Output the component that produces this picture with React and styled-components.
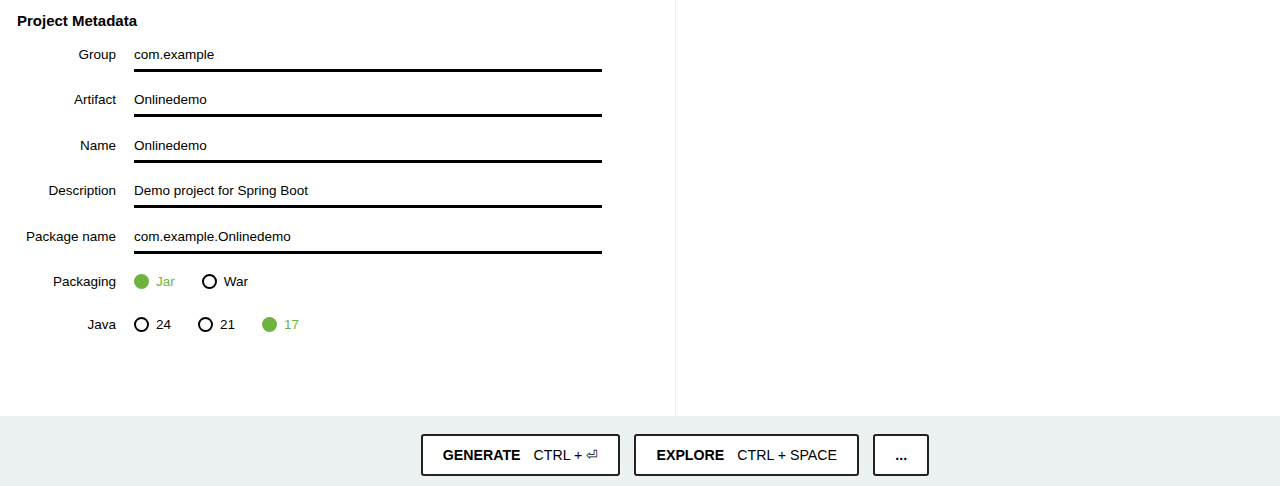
import React from "react";
import styled, { createGlobalStyle } from "styled-components";

const Global = createGlobalStyle`
  html, body { margin: 0; padding: 0; background: #fff; }
  body { font-family: "Liberation Sans", Arial, sans-serif; color: #000; }
`;

const Page = styled.div`
  width: 1280px;
  height: 486px;
  display: flex;
  flex-direction: column;
  overflow: hidden;
`;

const Main = styled.div`
  height: 416px;
  display: flex;
`;

const LeftCol = styled.div`
  box-sizing: border-box;
  width: 676px;
  border-right: 1px solid #e8eded;
  padding: 12px 0 0 17px;
`;

const RightCol = styled.div`
  flex: 1;
`;

const Title = styled.div`
  font-weight: bold;
  font-size: 15px;
  line-height: 18px;
  margin-bottom: 16px;
`;

const Row = styled.div`
  display: flex;
  align-items: flex-start;
  height: ${(p) => p.$h || 45.4}px;
`;

const Label = styled.div`
  width: 99px;
  text-align: right;
  font-size: 13.5px;
  line-height: 18px;
  padding-right: 18px;
`;

const Field = styled.div`
  width: 468px;
  font-size: 13.5px;
  line-height: 18px;
  padding-bottom: 5px;
  border-bottom: 3px solid #000;
`;

const Radios = styled.div`
  display: flex;
  align-items: center;
  height: 18px;
`;

const Radio = styled.div`
  display: flex;
  align-items: center;
  font-size: 13.5px;
  line-height: 18px;
  margin-right: 27px;
  color: ${(p) => (p.$on ? "#6db33f" : "#000")};
`;

const Dot = styled.span`
  width: 15px;
  height: 15px;
  border-radius: 50%;
  box-sizing: border-box;
  margin-right: 7px;
  background: ${(p) => (p.$on ? "#6db33f" : "transparent")};
  border: ${(p) => (p.$on ? "none" : "2px solid #000")};
`;

const Footer = styled.div`
  flex: 1;
  background: #ecf1f1;
  display: flex;
  justify-content: center;
  align-items: flex-start;
  padding: 18px 0 0 70px;
  gap: 14px;
`;

const Button = styled.div`
  height: 42px;
  box-sizing: border-box;
  border: 2px solid #222;
  border-radius: 3px;
  background: #fff;
  display: flex;
  align-items: center;
  justify-content: center;
  padding: 0 20px;
  min-width: ${(p) => p.$w || 0}px;
  font-size: 14.2px;
  gap: 13px;
`;

const Strong = styled.span`
  font-weight: bold;
`;

const Keys = styled.span`
  font-weight: normal;
`;

const fields = [
  ["Group", "com.example"],
  ["Artifact", "Onlinedemo"],
  ["Name", "Onlinedemo"],
  ["Description", "Demo project for Spring Boot"],
  ["Package name", "com.example.Onlinedemo"],
];

export default function App() {
  return (
    <>
      <Global />
      <Page>
        <Main>
          <LeftCol>
            <Title>Project Metadata</Title>
            {fields.map(([l, v]) => (
              <Row key={l}>
                <Label>{l}</Label>
                <Field>{v}</Field>
              </Row>
            ))}
            <Row $h={43}>
              <Label>Packaging</Label>
              <Radios>
                <Radio $on><Dot $on />Jar</Radio>
                <Radio><Dot />War</Radio>
              </Radios>
            </Row>
            <Row>
              <Label>Java</Label>
              <Radios>
                <Radio><Dot />24</Radio>
                <Radio><Dot />21</Radio>
                <Radio $on><Dot $on />17</Radio>
              </Radios>
            </Row>
          </LeftCol>
          <RightCol />
        </Main>
        <Footer>
          <Button $w={198}>
            <Strong>GENERATE</Strong>
            <Keys>CTRL + ⏎</Keys>
          </Button>
          <Button $w={225}>
            <Strong>EXPLORE</Strong>
            <Keys>CTRL + SPACE</Keys>
          </Button>
          <Button $w={56}>
            <Strong>...</Strong>
          </Button>
        </Footer>
      </Page>
    </>
  );
}
